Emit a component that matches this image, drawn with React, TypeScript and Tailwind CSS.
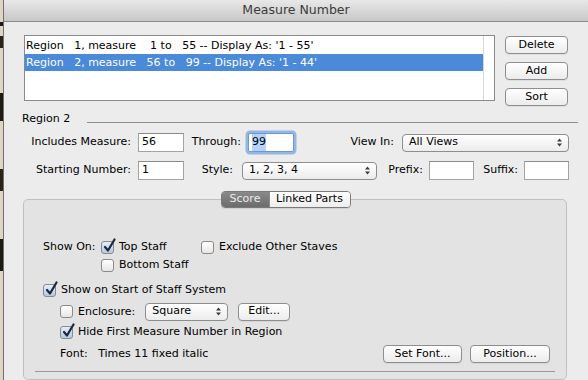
import React from 'react';

const font = "font-['DejaVu_Sans',sans-serif]";

function Btn({ children, className = '' }: { children: React.ReactNode; className?: string }) {
  return (
    <div
      className={`flex h-[18px] items-center justify-center rounded-[4px] border border-[#8e8e8e] bg-gradient-to-b from-white to-[#ececec] text-[11px] text-black shadow-[0_1px_0_rgba(0,0,0,0.06)] ${className}`}
    >
      {children}
    </div>
  );
}

function Arrows() {
  return (
    <svg width="5" height="9" viewBox="0 0 5 9" className="shrink-0">
      <path d="M0 3.5 L2.5 0.5 L5 3.5 Z M0 5.5 L2.5 8.5 L5 5.5 Z" fill="#3a3a3a" />
    </svg>
  );
}

function Select({ value, className = '' }: { value: string; className?: string }) {
  return (
    <div
      className={`flex h-[18px] items-center justify-between rounded-[4px] border border-[#8e8e8e] bg-gradient-to-b from-white to-[#ececec] pl-[6px] pr-[6px] text-[11px] text-black ${className}`}
    >
      <span>{value}</span>
      <Arrows />
    </div>
  );
}

function Field({ value, className = '' }: { value?: string; className?: string }) {
  return (
    <div
      className={`flex h-[19px] items-center border border-[#a3a3a3] border-t-[#8a8a8a] bg-white pl-[3px] text-[11px] text-black ${className}`}
    >
      {value}
    </div>
  );
}

function Check({ checked = false }: { checked?: boolean }) {
  return (
    <div
      className={`relative h-[13px] w-[13px] shrink-0 rounded-[3px] border border-[#8a8a8a] bg-gradient-to-b ${
        checked ? 'from-[#e6eef8] to-[#b4c9e6]' : 'from-white to-[#e6e6e6]'
      }`}
    >
      {checked && (
        <svg className="absolute -top-[4px] left-[1px]" width="13" height="15" viewBox="0 0 13 15">
          <path d="M2 9 L5 12.5 L11.5 1.5" stroke="#1c2740" strokeWidth="2.2" fill="none" strokeLinecap="round" strokeLinejoin="round" />
        </svg>
      )}
    </div>
  );
}

function CheckRow({ label, checked = false, className = '' }: { label: string; checked?: boolean; className?: string }) {
  return (
    <div className={`flex h-[14px] items-center gap-[5px] ${className}`}>
      <Check checked={checked} />
      <span className="text-[11px] leading-[14px] text-black">{label}</span>
    </div>
  );
}

export default function App() {
  return (
    <div className={`flex h-[380px] w-[588px] overflow-hidden ${font}`}>
      {/* bit of desktop behind the dialog */}
      <div className="flex w-[3px] flex-col bg-[#ddd6c2]">
        <div className="h-[22px]" />
        <div className="h-[4px] bg-[#1a1a1a]" />
        <div className="h-[10px]" />
        <div className="h-[12px] bg-[#2a2416]" />
        <div className="h-[45px]" />
        <div className="h-[28px] bg-[#1d1a12]" />
        <div className="h-[48px]" />
        <div className="h-[22px] bg-[#2a2416]" />
        <div className="h-[48px]" />
        <div className="h-[32px] bg-[#1d1a12]" />
      </div>

      <div className="flex flex-1 flex-col border-l border-[#707070] bg-[#ececec]">
        {/* title bar */}
        <div className="flex h-[22px] shrink-0 items-center justify-center border-b border-[#8c8c8c] bg-gradient-to-b from-[#e8e8e8] to-[#c8c8c8] text-[12.5px] text-[#3b3b3b]">
          Measure Number
        </div>

        {/* list + buttons */}
        <div className="mt-[13px] flex pl-[20px]">
          <div className="flex h-[66px] w-[471px] border border-[#8a8a8a] bg-white">
            <div className="flex flex-1 flex-col pt-[1px] text-[11px]">
              <div className="h-[17px] whitespace-pre pl-[1px] leading-[17px] text-black">
                {"Region   1, measure    1 to   55 -- Display As: '1 - 55'"}
              </div>
              <div className="h-[17px] whitespace-pre bg-[#4a8ad9] pl-[1px] leading-[17px] text-white">
                {"Region   2, measure   56 to   99 -- Display As: '1 - 44'"}
              </div>
            </div>
            <div className="w-[11px] border-l border-[#d6d6d6]" />
          </div>
          <div className="ml-[10px] flex w-[63px] flex-col gap-[8px] pt-[1px]">
            <Btn>Delete</Btn>
            <Btn>Add</Btn>
            <Btn>Sort</Btn>
          </div>
        </div>

        {/* Region 2 header */}
        <div className="mt-[6px] flex h-[14px] pl-[18px]">
          <span className="text-[11px] leading-[14px] text-black">Region 2</span>
          <div className="ml-[17px] mr-[10px] mt-[10px] h-px flex-1 bg-[#8e8e8e]" />
        </div>

        {/* Includes / Through / View In */}
        <div className="mt-[7px] flex h-[19px] items-center text-[11px] text-black">
          <div className="w-[127px] text-right">Includes Measure:</div>
          <Field value="56" className="ml-[7px] w-[46px]" />
          <div className="w-[57px] text-right">Through:</div>
          <div className="ml-[7px] flex h-[19px] w-[46px] items-center rounded-[2px] border border-[#6d98d2] bg-white pl-[3px] shadow-[0_0_0_2.5px_rgba(110,160,225,0.7)]">
            <span className="bg-[#b3d3fd]">99</span>
          </div>
          <div className="w-[100px] text-right">View In:</div>
          <Select value="All Views" className="ml-[8px] w-[167px]" />
        </div>

        {/* Starting / Style / Prefix / Suffix */}
        <div className="mt-[9px] flex h-[19px] items-center text-[11px] text-black">
          <div className="w-[127px] text-right">Starting Number:</div>
          <Field value="1" className="ml-[7px] w-[46px]" />
          <div className="w-[49px] text-right">Style:</div>
          <Select value="1, 2, 3, 4" className="ml-[9px] w-[135px]" />
          <div className="w-[46px] text-right">Prefix:</div>
          <Field className="ml-[6px] w-[45px]" />
          <div className="w-[44px] text-right">Suffix:</div>
          <Field className="ml-[6px] w-[45px]" />
        </div>

        {/* tabs */}
        <div className="relative z-10 mt-[11px] flex h-[17px] w-[543px] justify-center pl-[20px] text-[11px]">
          <div className="flex overflow-hidden rounded-[4px] border border-[#7a7a7a] shadow-[0_1px_0_rgba(0,0,0,0.08)]">
            <div className="flex w-[47px] items-center justify-center bg-gradient-to-b from-[#8a8a8a] to-[#6c6c6c] text-[#ececec]">
              Score
            </div>
            <div className="flex w-[81px] items-center justify-center border-l border-[#8a8a8a] bg-gradient-to-b from-white to-[#ededed] text-black">
              Linked Parts
            </div>
          </div>
        </div>

        {/* group box */}
        <div className="-mt-[9px] ml-[19px] flex h-[200px] w-[544px] flex-col rounded-[5px] border border-[#c0c0c0] bg-[#e3e3e3] pl-[19px] text-[11px] text-black">
          <div className="mt-[40px] flex h-[14px] items-center">
            <div className="w-[58px] leading-[14px]">Show On:</div>
            <CheckRow label="Top Staff" checked className="w-[100px]" />
            <CheckRow label="Exclude Other Staves" />
          </div>
          <CheckRow label="Bottom Staff" className="ml-[58px] mt-[4px]" />
          <CheckRow label="Show on Start of Staff System" checked className="mt-[11px]" />
          <div className="ml-[17px] mt-[6px] flex h-[17px] items-center">
            <CheckRow label="Enclosure:" />
            <Select value="Square" className="ml-[10px] w-[83px]" />
            <Btn className="ml-[10px] w-[52px]">Edit...</Btn>
          </div>
          <CheckRow label="Hide First Measure Number in Region" checked className="ml-[17px] mt-[5px]" />
          <div className="ml-[17px] mt-[6px] flex h-[18px] items-center pr-[16px]">
            <div className="flex-1 whitespace-pre">{'Font:   Times 11 fixed italic'}</div>
            <Btn className="w-[79px]">Set Font...</Btn>
            <Btn className="ml-[8px] w-[80px]">Position...</Btn>
          </div>
          <div className="-ml-[8px] mt-[8px] h-px w-[520px] bg-[#9a9a9a]" />
        </div>
      </div>
    </div>
  );
}
